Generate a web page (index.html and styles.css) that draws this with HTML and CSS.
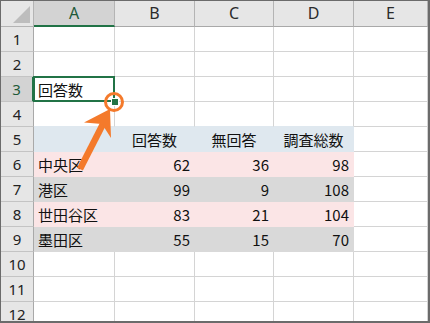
FILE: index.html
```html
<!DOCTYPE html>
<html lang="ja">
<head>
<meta charset="utf-8">
<title>回答数</title>
<link rel="stylesheet" href="styles.css">
</head>
<body>
<div class="sheet">
  <div class="grid">
    <div class="corner"><span class="tri"></span></div>
    <div class="colhead sel">A</div>
    <div class="colhead">B</div>
    <div class="colhead">C</div>
    <div class="colhead">D</div>
    <div class="colhead">E</div>

    <div class="rowhead">1</div><div class="cell"></div><div class="cell"></div><div class="cell"></div><div class="cell"></div><div class="cell"></div>
    <div class="rowhead">2</div><div class="cell"></div><div class="cell"></div><div class="cell"></div><div class="cell"></div><div class="cell"></div>
    <div class="rowhead sel">3</div><div class="cell active">回答数<span class="handle"></span></div><div class="cell"></div><div class="cell"></div><div class="cell"></div><div class="cell"></div>
    <div class="rowhead">4</div><div class="cell above"></div><div class="cell above"></div><div class="cell above"></div><div class="cell above"></div><div class="cell"></div>

    <div class="rowhead">5</div><div class="cell hd"></div><div class="cell hd ctr">回答数</div><div class="cell hd ctr">無回答</div><div class="cell hd ctr">調査総数</div><div class="cell"></div>
    <div class="rowhead">6</div><div class="cell pink">中央区</div><div class="cell pink num">62</div><div class="cell pink num">36</div><div class="cell pink num">98</div><div class="cell"></div>
    <div class="rowhead">7</div><div class="cell gray">港区</div><div class="cell gray num">99</div><div class="cell gray num">9</div><div class="cell gray num">108</div><div class="cell"></div>
    <div class="rowhead">8</div><div class="cell pink">世田谷区</div><div class="cell pink num">83</div><div class="cell pink num">21</div><div class="cell pink num">104</div><div class="cell"></div>
    <div class="rowhead">9</div><div class="cell gray">墨田区</div><div class="cell gray num">55</div><div class="cell gray num">15</div><div class="cell gray num">70</div><div class="cell"></div>

    <div class="rowhead">10</div><div class="cell"></div><div class="cell"></div><div class="cell"></div><div class="cell"></div><div class="cell"></div>
    <div class="rowhead">11</div><div class="cell"></div><div class="cell"></div><div class="cell"></div><div class="cell"></div><div class="cell"></div>
    <div class="rowhead">12</div><div class="cell"></div><div class="cell"></div><div class="cell"></div><div class="cell"></div><div class="cell"></div>
  </div>

  <!-- callout: ring around the fill handle and an arrow pointing at it -->
  <svg class="callout" width="430" height="323" viewBox="0 0 430 323">
    <circle cx="114" cy="102" r="8.5" fill="none" stroke="#f47a2b" stroke-width="3"/>
    <line x1="80" y1="169" x2="103" y2="124" stroke="#f47a2b" stroke-width="6.5"/>
    <polygon points="110,109 84,122.5 102,124 111,138" fill="#f47a2b"/>
  </svg>
</div>
</body>
</html>
```

FILE: styles.css
```css
* {
  box-sizing: border-box;
}

html, body {
  margin: 0;
  padding: 0;
  background: #ffffff;
}

.sheet {
  position: relative;
  width: 430px;
  height: 323px;
  border-style: solid;
  border-color: #6b6b6b;
  border-width: 1px 2px 2px 1px;
  overflow: hidden;
}

.grid {
  display: grid;
  grid-template-columns: 33px 81px 80px 79px 80px 1fr;
  grid-template-rows: 26px repeat(12, 25px);
  font-family: "Noto Sans CJK JP", "Noto Sans", sans-serif;
  font-size: 15px;
  color: #111;
}

.corner {
  position: relative;
  background: #e6e6e6;
  border-right: 1px solid #b4b4b4;
  border-bottom: 1px solid #b4b4b4;
}

.corner .tri {
  position: absolute;
  right: 3px;
  bottom: 3px;
  width: 0;
  height: 0;
  border-left: 17px solid transparent;
  border-bottom: 17px solid #bdbdbd;
}

.colhead {
  display: flex;
  align-items: center;
  justify-content: center;
  background: #e6e6e6;
  border-right: 1px solid #b4b4b4;
  border-bottom: 1px solid #a9a9a9;
  font-family: "Noto Sans", "DejaVu Sans", sans-serif;
  font-size: 16px;
  color: #2b2b2b;
  padding-bottom: 1px;
}

.colhead.sel {
  background: #d3d3d3;
  border-bottom: 2px solid #217346;
  color: #1e5a38;
}

.rowhead {
  text-align: center;
  line-height: 24px;
  background: #e6e6e6;
  border-right: 1px solid #a9a9a9;
  border-bottom: 1px solid #c4c4c4;
  font-family: "Noto Sans", "DejaVu Sans", sans-serif;
  font-size: 15px;
  color: #222;
}

.rowhead.sel {
  background: #d3d3d3;
  border-right: 2px solid #217346;
  color: #1e5a38;
}

.cell {
  position: relative;
  display: flex;
  align-items: center;
  padding: 0 4px 0 4px;
  border-right: 1px solid #d4d4d4;
  border-bottom: 1px solid #d4d4d4;
  white-space: nowrap;
}

.cell.num {
  justify-content: flex-end;
}

.cell.ctr {
  justify-content: center;
}

.cell.above {
  border-bottom-color: #dfe8ef;
}

.cell.hd {
  background: #dfe8ef;
  border-color: #dfe8ef;
}

.cell.pink {
  background: #fbe5e6;
  border-color: #fbe5e6;
}

.cell.gray {
  background: #d9d9d9;
  border-color: #d9d9d9;
}

/* active cell frame and fill handle */
.cell.active::after {
  content: "";
  position: absolute;
  left: -1px;
  top: -1px;
  right: -1px;
  bottom: -1px;
  border: 2px solid #217346;
  pointer-events: none;
}

.handle {
  position: absolute;
  right: -5px;
  bottom: -5px;
  width: 8px;
  height: 8px;
  background: #217346;
  border: 1px solid #ffffff;
  z-index: 2;
}

.callout {
  position: absolute;
  left: -1px;
  top: -1px;
  pointer-events: none;
}
```
